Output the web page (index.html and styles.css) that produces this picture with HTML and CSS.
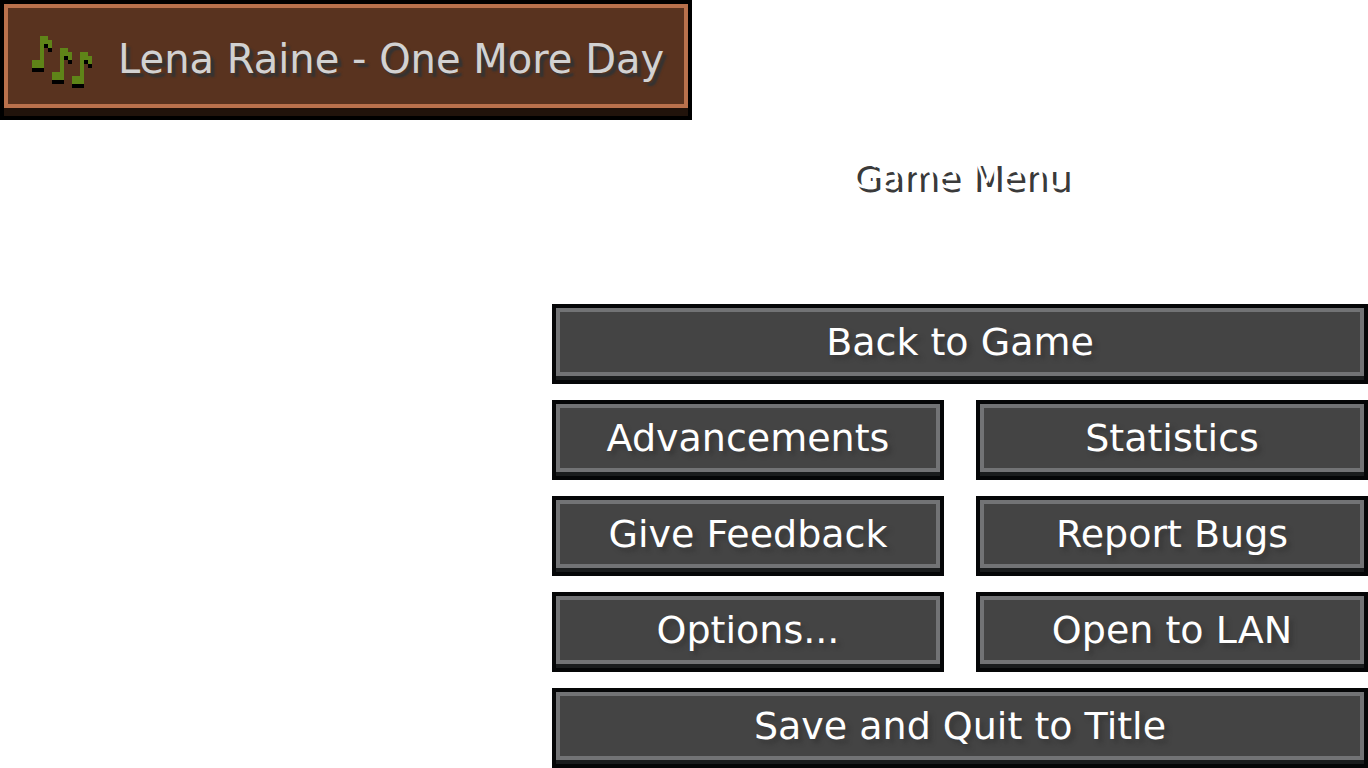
FILE: index.html
```html
<!DOCTYPE html>
<html lang="en">
<head>
<meta charset="UTF-8">
<meta name="viewport" content="width=device-width, initial-scale=1.0">
<title>Game Menu</title>
<link rel="stylesheet" href="styles.css">
</head>
<body>
    <div class="toast">
      <div class="toast-inner">
        <svg class="notes" viewBox="0 0 15 13" shape-rendering="crispEdges" aria-hidden="true">
          <defs>
            <g id="note">
              <path fill="#5f8418" d="M2 0h2v1h1v2h-1v-1h-1v6h-3v-2h2z"/>
              <path fill="#000" d="M3 2h1v1h1v1h-1v-1h-1zM0 8h3v1h-3z"/>
            </g>
          </defs>
          <use href="#note"/>
          <use href="#note" x="5" y="3"/>
          <use href="#note" x="10" y="4"/>
        </svg>
        <span class="song">Lena Raine - One More Day</span>
      </div>
    </div>

    <main class="menu">
      <h1>Game Menu</h1>
      <div class="buttons">
        <button type="button" class="wide">Back to Game</button>
        <button type="button">Advancements</button>
        <button type="button">Statistics</button>
        <button type="button">Give Feedback</button>
        <button type="button">Report Bugs</button>
        <button type="button">Options...</button>
        <button type="button">Open to LAN</button>
        <button type="button" class="wide">Save and Quit to Title</button>
      </div>
    </main>
</body>
</html>
```
FILE: styles.css
```css
* {
  box-sizing: border-box;
}
body {
  margin: 0;
  background: #fff;
  font-family: "DejaVu Sans", sans-serif;
  font-size: 38px;
  line-height: 44px;
}

/* now playing */
.toast {
  width: fit-content;
  background: #21130b;
  border: 4px solid #000;
  padding-bottom: 8px;
}
.toast-inner {
  display: flex;
  align-items: center;
  gap: 26px;
  border: 4px solid #b9714c;
  background: #59331f;
  padding: 28px 20px 16px 24px;
}
.notes {
  width: 60px;
  height: 52px;
}
.song {
  font-size: 40px;
  color: #d2d2d2;
  text-shadow: 4px 4px 2px #333;
  padding-bottom: 6px;
  white-space: nowrap;
}

.menu {
  max-width: 816px;
  margin-left: auto;
}
/* white text, only the shadow shows on a white page */
h1 {
  margin: 0;
  padding: 34px 0 106px;
  font-size: 36px;
  font-weight: normal;
  text-align: center;
  color: #fff;
  text-shadow: 4px 4px 0 #3a3a3a;
}
.buttons {
  display: grid;
  grid-template-columns: 1fr 1fr;
  gap: 16px 32px;
}
.wide {
  grid-column: span 2;
}
button {
  font: inherit;
  color: #fff;
  background: #444;
  border: 4px solid #050607;
  border-radius: 0;
  padding: 12px 8px 16px;
  min-height: 80px;
  white-space: nowrap;
  text-shadow: 4px 4px 4px #383838;
  box-shadow: inset 0 -4px #1a1c1d, inset 0 -8px #727375, inset 0 0 0 4px #727375;
  cursor: pointer;
}
button:hover {
  background-color: #555;
}
```
